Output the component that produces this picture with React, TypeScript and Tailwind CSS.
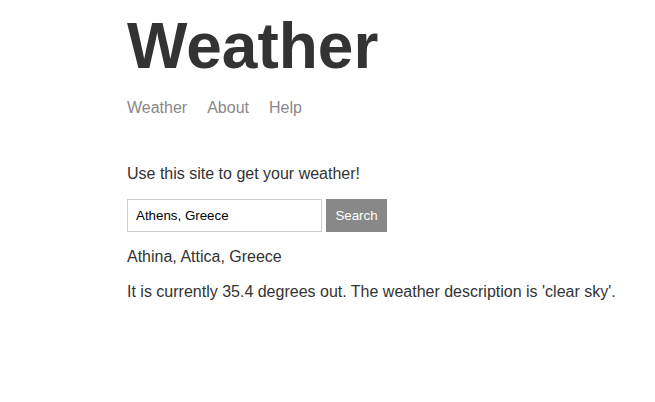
import React, { useState } from 'react';

export default function App() {
  const [location, setLocation] = useState('Athens, Greece');

  return (
    <div className="min-h-screen w-full bg-white text-[#333333] font-['Liberation_Sans',Arial,sans-serif]">
      <div className="pl-[127px]">
        <header>
          <h1 className="mt-[9px] text-[64px] leading-[74px] font-bold">Weather</h1>
          <nav className="mt-[16px] flex gap-[20px] text-[16px] leading-[18px] text-[#888888]">
            <a href="#">Weather</a>
            <a href="#">About</a>
            <a href="#">Help</a>
          </nav>
        </header>

        <main>
          <p className="mt-[48px] text-[16px] leading-[18px]">Use this site to get your weather!</p>

          <form className="mt-[16px] flex gap-[4px]" onSubmit={(e) => e.preventDefault()}>
            <input
              className="h-[33px] w-[195px] border border-[#cccccc] px-[8px] text-[13.33px] text-black outline-none"
              value={location}
              onChange={(e) => setLocation(e.target.value)}
              placeholder="Location"
            />
            <button className="h-[33px] w-[61px] border border-[#888888] bg-[#888888] text-[13.33px] text-white">
              Search
            </button>
          </form>

          <p className="mt-[16px] text-[16px] leading-[18px]">Athina, Attica, Greece</p>
          <p className="mt-[17px] text-[16px] leading-[18px] whitespace-nowrap">
            It is currently 35.4 degrees out. The weather description is 'clear sky'.
          </p>
        </main>
      </div>
    </div>
  );
}
